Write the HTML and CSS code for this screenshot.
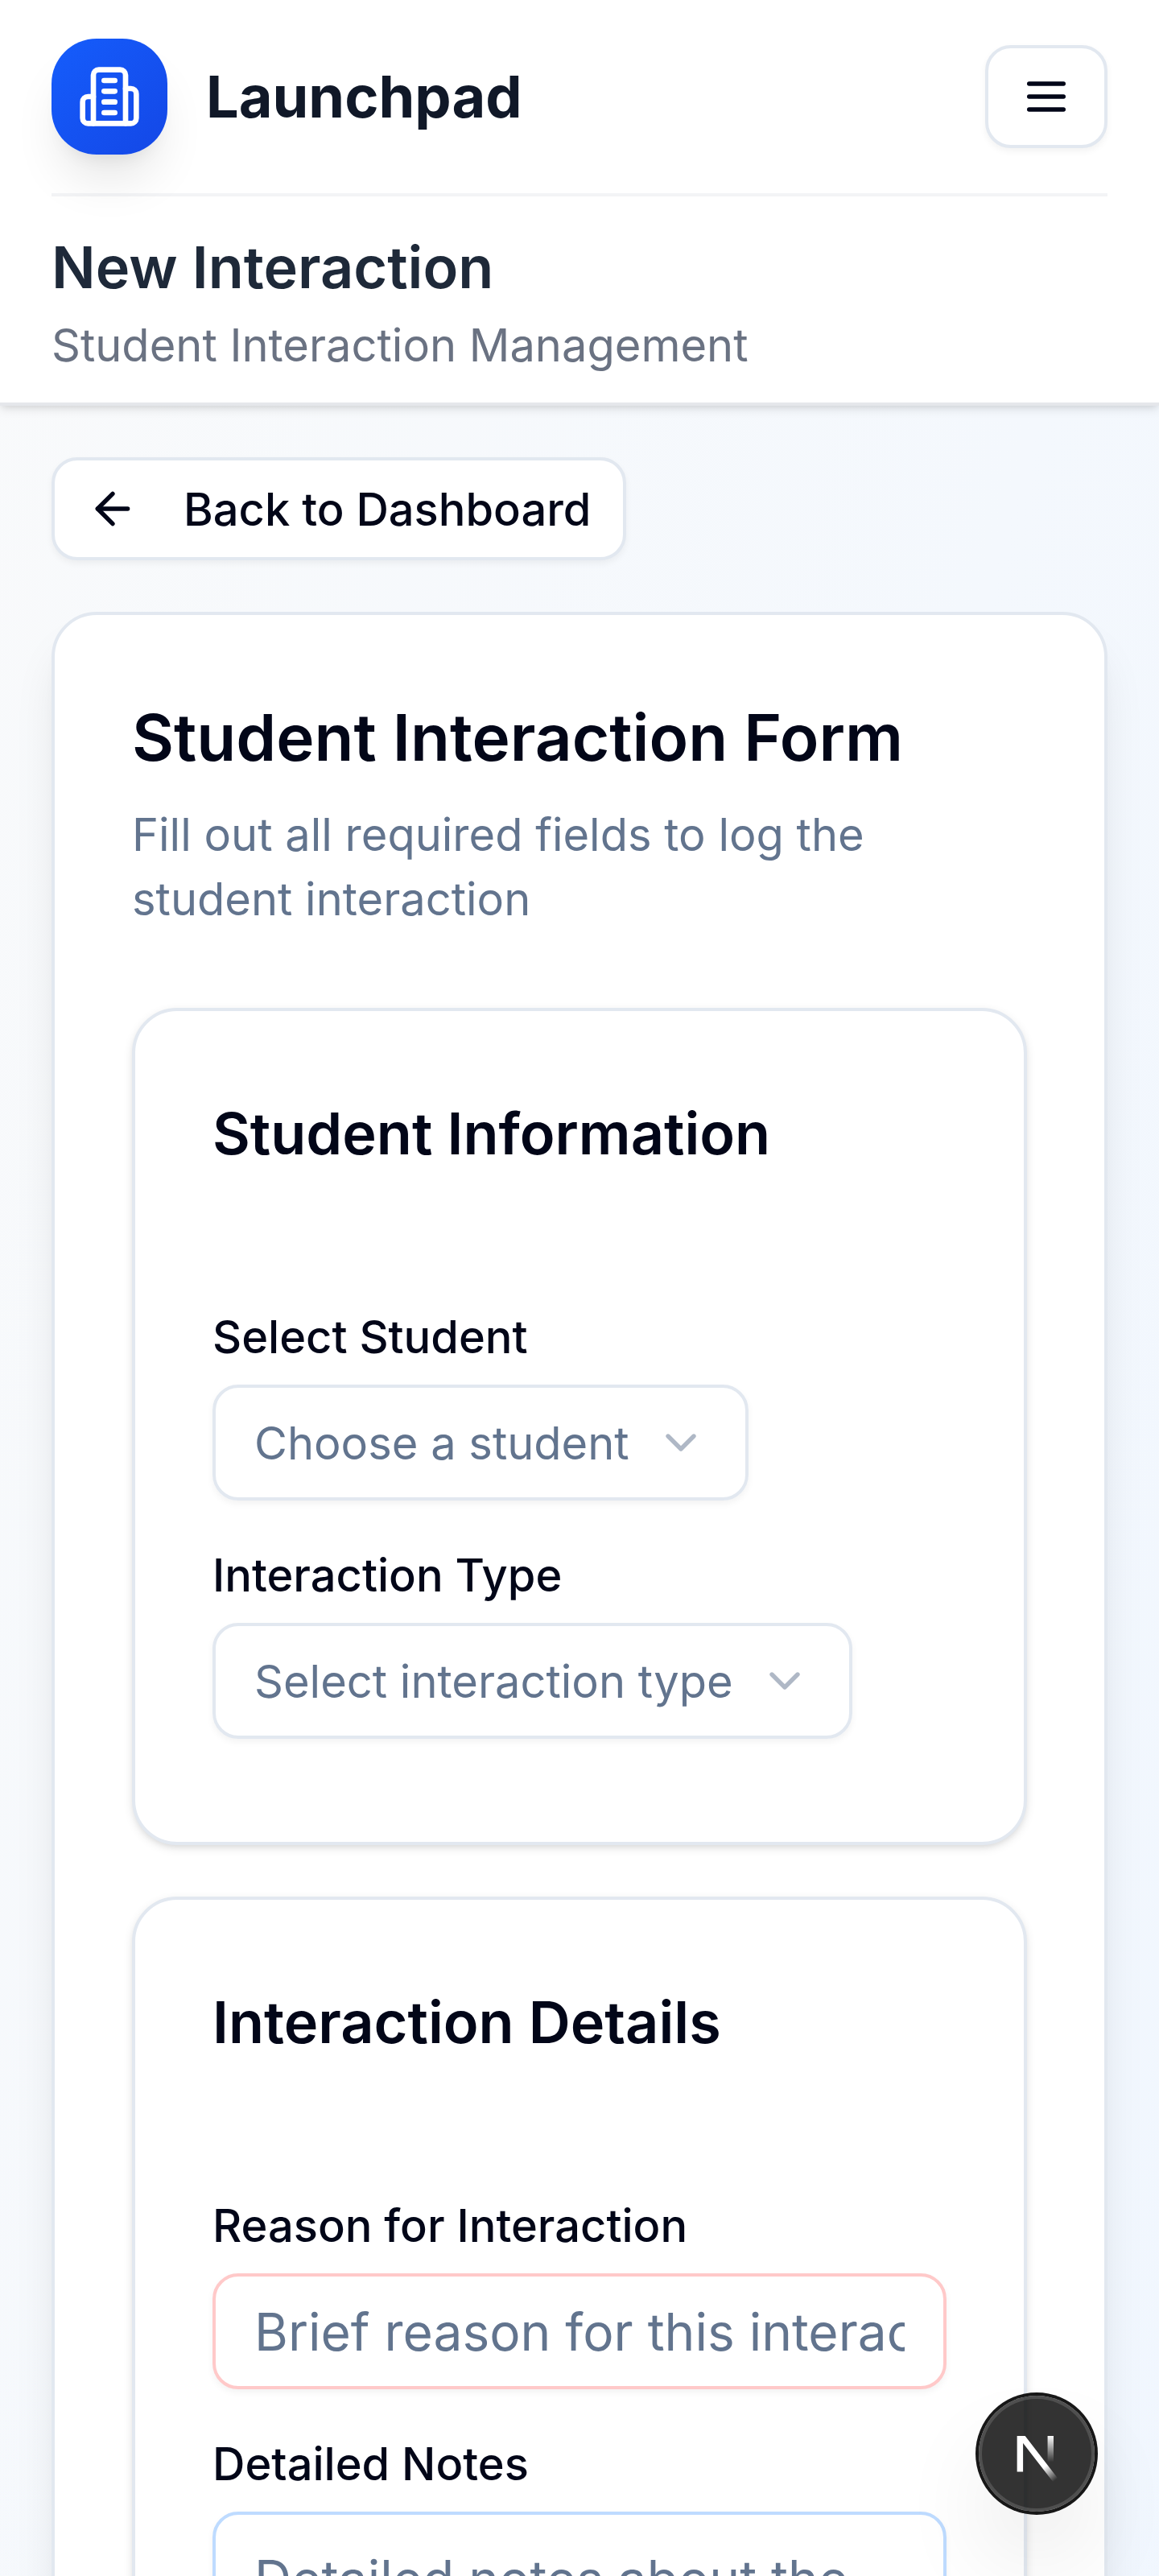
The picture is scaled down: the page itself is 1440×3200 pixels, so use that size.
FILE: index.html
```html
<!DOCTYPE html>
<html lang="en">
<head>
<meta charset="utf-8">
<title>Launchpad - New Interaction</title>
<link rel="stylesheet" href="styles.css">
</head>
<body>
<div class="page">
  <header class="header">
    <div class="topbar">
      <div class="brand">
        <div class="logo">
          <svg class="icon logo-icon" viewBox="0 0 24 24"><path d="M6 22V4a2 2 0 0 1 2-2h8a2 2 0 0 1 2 2v18Z"/><path d="M6 12H4a2 2 0 0 0-2 2v6a2 2 0 0 0 2 2h2"/><path d="M18 9h2a2 2 0 0 1 2 2v9a2 2 0 0 1-2 2h-2"/><path d="M10 6h4"/><path d="M10 10h4"/><path d="M10 14h4"/><path d="M10 18h4"/></svg>
        </div>
        <span class="brand-name">Launchpad</span>
      </div>
      <button class="button menu-button" aria-label="Menu">
        <svg class="icon" viewBox="0 0 24 24"><path d="M4 6h16"/><path d="M4 12h16"/><path d="M4 18h16"/></svg>
      </button>
    </div>
    <div class="page-title">
      <h1 class="title">New Interaction</h1>
      <p class="subtitle">Student Interaction Management</p>
    </div>
  </header>

  <main class="main">
    <button class="button back-button">
      <svg class="icon" viewBox="0 0 24 24"><path d="m12 19-7-7 7-7"/><path d="M19 12H5"/></svg>
      <span class="button-text">Back to Dashboard</span>
    </button>

    <section class="card form-card">
      <div class="form-header">
        <h2 class="form-title">Student Interaction Form</h2>
        <p class="form-description">Fill out all required fields to log the student interaction</p>
      </div>

      <div class="sections">
        <section class="card section">
          <h3 class="section-title">Student Information</h3>
          <div class="fields">
            <div class="field">
              <label class="label">Select Student</label>
              <button class="select"><span class="button-text">Choose a student</span><svg class="icon chevron" viewBox="0 0 24 24"><path d="m6 9 6 6 6-6"/></svg></button>
            </div>
            <div class="field">
              <label class="label">Interaction Type</label>
              <button class="select"><span class="button-text">Select interaction type</span><svg class="icon chevron" viewBox="0 0 24 24"><path d="m6 9 6 6 6-6"/></svg></button>
            </div>
          </div>
        </section>

        <section class="card section">
          <h3 class="section-title">Interaction Details</h3>
          <div class="fields">
            <div class="field">
              <label class="label" for="reason">Reason for Interaction</label>
              <input class="control input" id="reason" placeholder="Brief reason for this interaction">
            </div>
            <div class="field">
              <label class="label" for="notes">Detailed Notes</label>
              <textarea class="control textarea" id="notes" placeholder="Detailed notes about the interaction"></textarea>
            </div>
          </div>
        </section>
      </div>
    </section>
  </main>

  <div class="dev-badge">
    <svg class="dev-mark" viewBox="0 0 36 36" fill="none">
      <defs>
        <linearGradient id="diagonal" x1="9.95555" y1="11.1226" x2="15.4778" y2="17.9671" gradientUnits="userSpaceOnUse"><stop stop-color="#fff"/><stop offset="0.604072" stop-color="#fff" stop-opacity="0"/><stop offset="1" stop-color="#fff" stop-opacity="0"/></linearGradient>
        <linearGradient id="stem" x1="11.8222" y1="1.40039" x2="11.791" y2="9.62542" gradientUnits="userSpaceOnUse"><stop stop-color="#fff"/><stop offset="1" stop-color="#fff" stop-opacity="0"/></linearGradient>
        <mask id="cap" maskUnits="userSpaceOnUse" x="0" y="0" width="20" height="20"><rect width="20" height="20" fill="#fff"/><rect width="5" height="1.5" fill="#000"/></mask>
      </defs>
      <g transform="translate(10.5 11)" stroke-width="1.86">
        <path d="M13.3 15.2 2.34 1v11.6" stroke="url(#diagonal)" mask="url(#cap)"/>
        <path d="M11.825 1.5v11.6" stroke="url(#stem)"/>
      </g>
    </svg>
  </div>
</div>
</body>
</html>
```
FILE: styles.css
```css
* {
  box-sizing: border-box;
  margin: 0;
}

body {
  font-family: Inter, "Liberation Sans", sans-serif;
  font-size: 56px;
  line-height: 80px;
  color: #020618;
}

button,
input,
textarea {
  font: inherit;
  color: inherit;
}

.page {
  position: relative;
  height: 3200px;
  overflow: hidden;
  background: linear-gradient(to bottom right, #f9fafb, #eff6ff) 0 0 / 100% 4900px no-repeat;
}

.icon {
  width: 64px;
  height: 64px;
  flex: none;
  fill: none;
  stroke: currentColor;
  stroke-width: 2;
  stroke-linecap: round;
  stroke-linejoin: round;
}

.header {
  position: relative;
  padding: 0 64px;
  background: #fff;
  border-bottom: 4px solid #e5e7eb;
  box-shadow: 0 4px 12px rgb(0 0 0 / 0.1), 0 4px 8px -4px rgb(0 0 0 / 0.1);
}

.topbar {
  display: flex;
  align-items: center;
  justify-content: space-between;
  padding: 48px 0;
}

.brand {
  display: flex;
  align-items: center;
  gap: 48px;
}

.logo {
  display: grid;
  place-items: center;
  width: 144px;
  height: 144px;
  border-radius: 56px;
  color: #fff;
  background: linear-gradient(to bottom right, #155dfc, #1447e6);
  box-shadow: 0 40px 60px -12px rgb(0 0 0 / 0.1), 0 16px 24px -16px rgb(0 0 0 / 0.1);
}

.logo-icon {
  width: 80px;
  height: 80px;
}

.brand-name {
  font-size: 72px;
  font-weight: 700;
  line-height: 112px;
  color: #101828;
}

.button {
  display: flex;
  align-items: center;
  height: 128px;
  border: 4px solid #e2e8f0;
  border-radius: 32px;
  background: #fff;
  box-shadow: 0 4px 8px rgb(0 0 0 / 0.05);
  font-weight: 500;
}

.button-text {
  padding-top: 2px;
}

.menu-button {
  justify-content: center;
  width: 152px;
  padding: 0;
}

.page-title {
  padding: 32px 0 31px;
  border-top: 4px solid #f3f4f6;
}

.title {
  font-size: 72px;
  font-weight: 600;
  line-height: 112px;
  color: #1e2939;
}

.subtitle {
  padding-top: 1px;
  color: #6a7282;
}

.main {
  display: flex;
  flex-direction: column;
  align-items: flex-start;
  gap: 64px;
  padding: 64px;
}

.back-button {
  gap: 56px;
  padding: 0 40px;
}

.card {
  border: 4px solid #e2e8f0;
  border-radius: 56px;
  background: #fff;
  padding: 96px;
}

.form-card {
  width: 100%;
  box-shadow: 0 40px 60px -12px rgb(0 0 0 / 0.1), 0 16px 24px -16px rgb(0 0 0 / 0.1);
}

.form-header {
  display: grid;
  gap: 25px;
  margin-bottom: 95px;
}

.form-title {
  font-size: 80px;
  font-weight: 600;
  line-height: 112px;
}

.form-description {
  color: #62748e;
}

.sections {
  display: grid;
  gap: 64px;
}

.section {
  padding-bottom: 128px;
  box-shadow: 0 4px 12px rgb(0 0 0 / 0.1), 0 4px 8px -4px rgb(0 0 0 / 0.1);
}

.section-title {
  margin-bottom: 168px;
  font-size: 72px;
  font-weight: 600;
  line-height: 112px;
}

.fields {
  display: grid;
  gap: 64px;
}

.field {
  display: flex;
  flex-direction: column;
  align-items: flex-start;
  gap: 31px;
}

.label {
  padding-top: 1px;
  font-weight: 500;
  line-height: 56px;
}

.select {
  display: flex;
  align-items: center;
  gap: 32px;
  height: 144px;
  padding: 0 48px;
  border: 4px solid #e2e8f0;
  border-radius: 32px;
  background: transparent;
  box-shadow: 0 4px 8px rgb(0 0 0 / 0.05);
  color: #62748e;
  white-space: nowrap;
}

.chevron {
  opacity: 0.5;
}

.control {
  display: block;
  width: 100%;
  border: 4px solid;
  border-radius: 32px;
  background: #fff;
  box-shadow: 0 4px 8px rgb(0 0 0 / 0.05);
  font-size: 64px;
  line-height: 96px;
}

.control::placeholder {
  color: #62748e;
  opacity: 1;
}

.input {
  height: 144px;
  padding: 16px 48px;
  border-color: #ffc9c9;
}

.textarea {
  height: 480px;
  padding: 32px 48px;
  border-color: #bedbff;
  resize: none;
}

.dev-badge {
  position: absolute;
  right: 80px;
  bottom: 80px;
  width: 144px;
  height: 144px;
  border-radius: 50%;
  background: rgb(0 0 0 / 0.8);
  box-shadow: 0 0 0 4px #171717, inset 0 0 0 4px rgb(255 255 255 / 0.14), 0 64px 128px -32px rgb(0 0 0 / 0.24);
}

.dev-mark {
  display: block;
  width: 144px;
  height: 144px;
}
```
